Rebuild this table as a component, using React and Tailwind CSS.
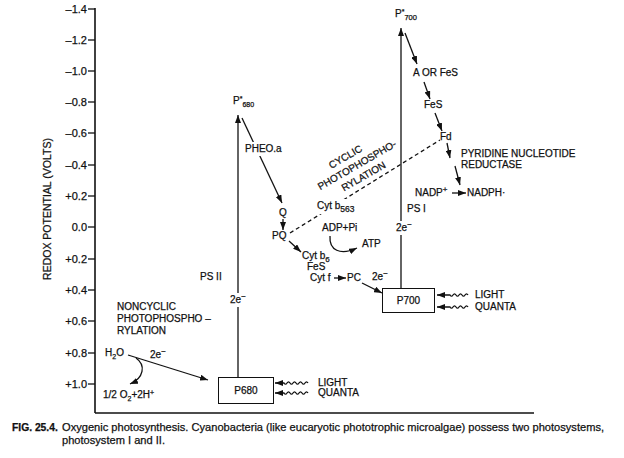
import React from 'react';

const ticks = [
  { label: '–1.4', y: 9, top: 'top-[4px]' },
  { label: '–1.2', y: 40, top: 'top-[35px]' },
  { label: '–1.0', y: 71, top: 'top-[66px]' },
  { label: '–0.8', y: 102, top: 'top-[97px]' },
  { label: '–0.6', y: 133, top: 'top-[128px]' },
  { label: '–0.4', y: 165, top: 'top-[160px]' },
  { label: '+0.2', y: 196, top: 'top-[191px]' },
  { label: '0.0', y: 227, top: 'top-[222px]' },
  { label: '+0.2', y: 259, top: 'top-[254px]' },
  { label: '+0.4', y: 290, top: 'top-[285px]' },
  { label: '+0.6', y: 321, top: 'top-[316px]' },
  { label: '+0.8', y: 353, top: 'top-[348px]' },
  { label: '+1.0', y: 384, top: 'top-[379px]' },
];

// squiggly "light quanta" line, drawn right to left, ends in an arrow
const wave = (x1, x2, y) => {
  let d = `M${x1} ${y}`;
  let x = x1;
  while (x - 6 >= x2 + 8) {
    d += ' q-1.5 -2.4 -3 0 t-3 0';
    x -= 6;
  }
  return `${d} L${x2} ${y}`;
};

const Sub = ({ children, className = 'text-[7px]' }) => (
  <span className={`relative top-[3px] ${className}`}>{children}</span>
);

const TwoE = () => (
  <>
    2e<sup className="text-[8px]">−</sup>
  </>
);

const Diagram = () => (
  <div className="relative h-[418px] w-full text-[10px] leading-none">
    <svg className="absolute inset-0" width="624" height="418" viewBox="0 0 624 418">
      <defs>
        <marker
          id="ah"
          viewBox="0 0 8 6"
          refX="8"
          refY="3"
          markerWidth="8"
          markerHeight="6"
          orient="auto"
          markerUnits="userSpaceOnUse"
        >
          <path d="M0 0 L8 3 L0 6 z" fill="#111" />
        </marker>
      </defs>
      <g stroke="#111" fill="none" strokeWidth="1.3">
        {/* axes */}
        <line x1="95" y1="8" x2="95" y2="413" strokeWidth="1.6" />
        <line x1="95" y1="413" x2="534" y2="413" strokeWidth="1.6" />
        {ticks.map((t, i) => (
          <line key={i} x1="88" y1={t.y} x2="95" y2={t.y} />
        ))}

        {/* photosystem II */}
        <line x1="238" y1="377" x2="238" y2="115" markerEnd="url(#ah)" />
        <line x1="242" y1="118" x2="282" y2="203" markerEnd="url(#ah)" />
        <line x1="283" y1="219" x2="283" y2="230" markerEnd="url(#ah)" />
        <line x1="289" y1="241" x2="301" y2="252" markerEnd="url(#ah)" />
        <path d="M330 236 C329 250 340 256 357 248" markerEnd="url(#ah)" />
        <line x1="334" y1="278" x2="346" y2="278" markerEnd="url(#ah)" />
        <line x1="362" y1="283" x2="382" y2="293" markerEnd="url(#ah)" />

        {/* cyclic path */}
        <line x1="290" y1="233" x2="440" y2="140" strokeDasharray="4 3" />

        {/* photosystem I */}
        <line x1="401" y1="288" x2="401" y2="28" markerEnd="url(#ah)" />
        <line x1="405" y1="33" x2="417" y2="64" markerEnd="url(#ah)" />
        <line x1="424" y1="82" x2="430" y2="99" markerEnd="url(#ah)" />
        <line x1="435" y1="113" x2="442" y2="131" markerEnd="url(#ah)" />
        <line x1="447" y1="143" x2="450" y2="158" markerEnd="url(#ah)" />
        <line x1="455" y1="166" x2="460" y2="185" markerEnd="url(#ah)" />
        <line x1="452" y1="193" x2="466" y2="193" markerEnd="url(#ah)" />

        {/* water splitting */}
        <line x1="128" y1="355" x2="208" y2="380" markerEnd="url(#ah)" />
        <path d="M136 358 C146 365 144 378 130 384" markerEnd="url(#ah)" />

        {/* light quanta */}
        <path d={wave(308, 275, 383)} markerEnd="url(#ah)" />
        <path d={wave(308, 275, 393)} markerEnd="url(#ah)" />
        <path d={wave(468, 437, 295)} markerEnd="url(#ah)" />
        <path d={wave(468, 437, 307)} markerEnd="url(#ah)" />
      </g>
    </svg>

    {ticks.map((t, i) => (
      <div key={i} className={`absolute left-[46px] w-[42px] pr-[1px] text-right text-[11px] ${t.top}`}>
        {t.label}
      </div>
    ))}

    <div className="absolute left-[47px] top-[209px] -translate-x-1/2 -translate-y-1/2 -rotate-90 whitespace-nowrap text-[10.5px]">
      REDOX POTENTIAL (VOLTS)
    </div>

    {/* PS II side */}
    <div className="absolute left-[233px] top-[96px] whitespace-nowrap">
      P<sup className="text-[7px]">*</sup>
      <Sub>680</Sub>
    </div>
    <div className="absolute left-[245px] top-[142px] bg-white py-[2px]">PHEO.a</div>
    <div className="absolute left-[279px] top-[208px]">Q</div>
    <div className="absolute left-[272px] top-[231px]">PQ</div>
    <div className="absolute left-[317px] top-[199px] whitespace-nowrap bg-white pt-[2px] pb-[3px]">
      Cyt b<Sub className="text-[8.5px]">563</Sub>
    </div>
    <div className="absolute left-[322px] top-[223px]">ADP+Pi</div>
    <div className="absolute left-[362px] top-[239px]">ATP</div>
    <div className="absolute left-[302px] top-[251px] whitespace-nowrap">
      Cyt b<Sub className="text-[8px]">6</Sub>
    </div>
    <div className="absolute left-[307px] top-[262px]">FeS</div>
    <div className="absolute left-[310px] top-[273px]">Cyt f</div>
    <div className="absolute left-[347px] top-[273px]">PC</div>
    <div className="absolute left-[372px] top-[272px]">
      <TwoE />
    </div>
    <div className="absolute left-[200px] top-[272px]">PS II</div>
    <div className="absolute left-[229px] top-[293px] bg-white px-[1px] py-[2px]">
      <TwoE />
    </div>

    <div className="absolute left-[357px] top-[165px] -translate-x-1/2 -translate-y-1/2 -rotate-[30deg] whitespace-nowrap text-center leading-[13px]">
      <div className="pr-[12px]">CYCLIC</div>
      <div>PHOTOPHOSPHO-</div>
      <div>RYLATION</div>
    </div>

    {/* PS I side */}
    <div className="absolute left-[395px] top-[9px] whitespace-nowrap">
      P<sup className="text-[7px]">*</sup>
      <Sub className="text-[7.5px]">700</Sub>
    </div>
    <div className="absolute left-[413px] top-[68px] whitespace-nowrap">A OR FeS</div>
    <div className="absolute left-[424px] top-[100px]">FeS</div>
    <div className="absolute left-[440px] top-[132px]">Fd</div>
    <div className="absolute left-[461px] top-[148px] whitespace-nowrap leading-[11px]">
      PYRIDINE NUCLEOTIDE
      <br />
      REDUCTASE
    </div>
    <div className="absolute left-[415px] top-[188px] whitespace-nowrap">
      NADP<sup className="text-[8px]">+</sup>
    </div>
    <div className="absolute left-[467px] top-[188px] whitespace-nowrap">NADPH·</div>
    <div className="absolute left-[407px] top-[204px]">PS I</div>
    <div className="absolute left-[395px] top-[221px] bg-white px-[1px] py-[2px]">
      <TwoE />
    </div>

    {/* boxes */}
    <div className="absolute left-[218px] top-[377px] flex h-[27px] w-[56px] items-center justify-center border-[1.3px] border-[#111]">
      P680
    </div>
    <div className="absolute left-[382px] top-[288px] flex h-[25px] w-[53px] items-center justify-center border-[1.3px] border-[#111]">
      P700
    </div>

    <div className="absolute left-[318px] top-[378px] leading-[10px]">
      LIGHT
      <br />
      QUANTA
    </div>
    <div className="absolute left-[475px] top-[289px] leading-[12px]">
      LIGHT
      <br />
      QUANTA
    </div>

    {/* water side */}
    <div className="absolute left-[117px] top-[301px] whitespace-nowrap leading-[12px]">
      NONCYCLIC
      <br />
      PHOTOPHOSPHO –
      <br />
      RYLATION
    </div>
    <div className="absolute left-[105px] top-[348px] whitespace-nowrap">
      H<Sub>2</Sub>O
    </div>
    <div className="absolute left-[150px] top-[350px]">
      <TwoE />
    </div>
    <div className="absolute left-[103px] top-[390px] whitespace-nowrap">
      1/2 O<Sub>2</Sub>+2H<sup className="text-[7px]">+</sup>
    </div>
  </div>
);

export default function App() {
  return (
    <div className="h-[458px] w-[624px] overflow-hidden bg-white font-['Liberation_Sans',Arial,sans-serif] text-[#111] [-webkit-text-stroke:0.25px_#111]">
      <Diagram />
      <div className="flex items-baseline pl-[12px] pt-[3px] text-[11.1px] leading-[13px]">
        <span className="w-[50px] shrink-0 text-[10.3px] font-bold">FIG. 25.4.</span>
        <p className="w-[552px]">
          Oxygenic photosynthesis. Cyanobacteria (like eucaryotic phototrophic microalgae) possess two photosystems,
          photosystem I and II.
        </p>
      </div>
    </div>
  );
}
